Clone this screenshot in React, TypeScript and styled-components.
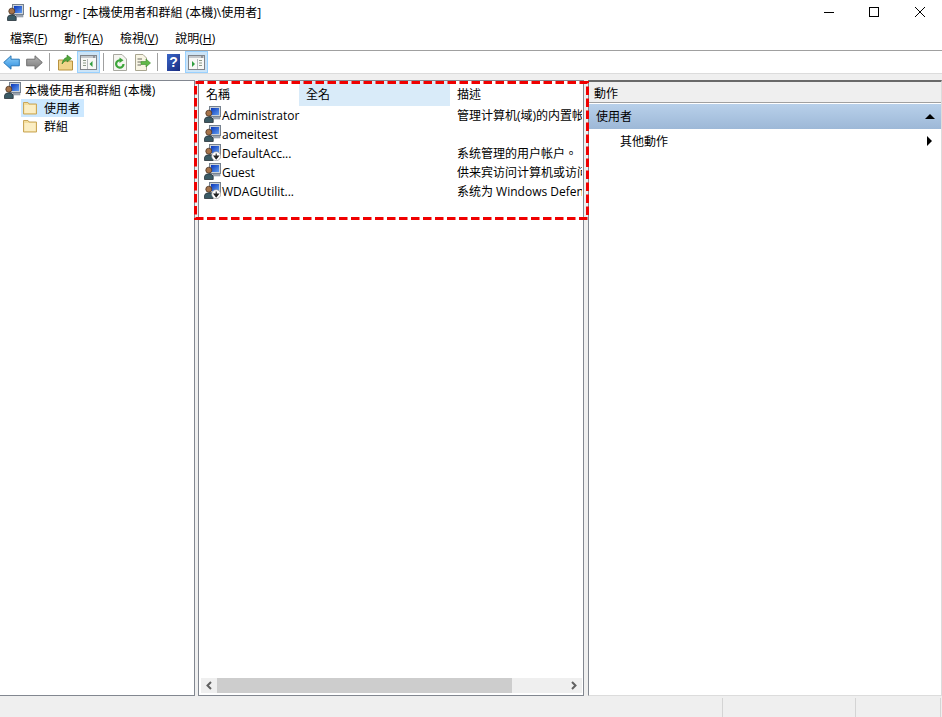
import React from 'react';
import styled, { createGlobalStyle } from 'styled-components';

const GlobalStyle = createGlobalStyle`
  html, body {
    margin: 0;
    padding: 0;
    background: #ffffff;
  }
  body {
    font-family: "Open Sans", "Noto Sans CJK TC", sans-serif;
    font-size: 12px;
    color: #000000;
  }
`;

const users = [
  { name: 'Administrator', desc: '管理计算机(域)的内置帐户', disabled: false },
  { name: 'aomeitest', desc: '', disabled: false },
  { name: 'DefaultAcc...', desc: '系统管理的用户帐户。', disabled: true },
  { name: 'Guest', desc: '供来宾访问计算机或访问域的内', disabled: false },
  { name: 'WDAGUtilit...', desc: '系统为 Windows Defender', disabled: true },
];

const UserIcon = ({ disabled }: { disabled?: boolean }) => (
  <svg width="17" height="17" viewBox="0 0 17 17">
    <defs>
      <linearGradient id="screen" x1="0" y1="0" x2="1" y2="1">
        <stop offset="0" stopColor="#0a36b8" />
        <stop offset="1" stopColor="#5f9cf0" />
      </linearGradient>
    </defs>
    <rect x="5.5" y="0.5" width="11" height="10" fill="#ccd3da" stroke="#76818e" />
    <rect x="7" y="2" width="8" height="7" fill="url(#screen)" />
    <rect x="9" y="11" width="7" height="2" fill="#a4adb8" stroke="#7d8692" strokeWidth="0.5" />
    <circle cx="4.8" cy="7.2" r="3" fill="#a5734a" stroke="#4b3524" strokeWidth="0.8" />
    <path d="M0.5 16.5 V13.5 Q1 10.8 4.8 10.8 Q8.6 10.8 9.2 13.5 V16.5 Z" fill="#3a5a64" stroke="#27323a" strokeWidth="0.8" />
    {disabled && (
      <g>
        <circle cx="12.2" cy="12.2" r="4.5" fill="#ffffff" stroke="#8a8a8a" strokeWidth="0.6" />
        <path d="M12.2 9.4 V12.5 M10 12 L12.2 14.8 L14.4 12 Z" stroke="#222" strokeWidth="1.1" fill="#222" />
      </g>
    )}
  </svg>
);

const FolderIcon = () => (
  <svg width="15" height="14" viewBox="0 0 15 14">
    <path d="M0.5 3 V1.5 H5 L6 3 H13.5 V13 H0.5 Z" fill="#f3dd9c" stroke="#c9a75a" />
    <rect x="1.5" y="4" width="11" height="8" fill="#fbeec4" />
  </svg>
);

const ArrowIcon = ({ dir, light }: { dir: 'left' | 'right'; light?: boolean }) => (
  <svg width="17" height="15" viewBox="0 0 17 15">
    <defs>
      <linearGradient id="arrowBlue" x1="0" y1="0" x2="0" y2="1">
        <stop offset="0" stopColor="#8fd0f8" />
        <stop offset="1" stopColor="#2f8ee0" />
      </linearGradient>
      <linearGradient id="arrowGray" x1="0" y1="0" x2="0" y2="1">
        <stop offset="0" stopColor="#b4b4b4" />
        <stop offset="1" stopColor="#7c7c7c" />
      </linearGradient>
    </defs>
    <path
      d={dir === 'left' ? 'M0.7 7.5 L8 0.8 V4.2 H16.3 V10.8 H8 V14.2 Z' : 'M16.3 7.5 L9 0.8 V4.2 H0.7 V10.8 H9 V14.2 Z'}
      fill={light ? 'url(#arrowGray)' : 'url(#arrowBlue)'}
      stroke={light ? '#6e6e6e' : '#2878b8'}
    />
  </svg>
);

const UpFolderIcon = () => (
  <svg width="17" height="17" viewBox="0 0 17 17">
    <path d="M1.5 6 H6 L7 7 H15.5 V16 H1.5 Z" fill="#f0d48a" stroke="#b8923f" />
    <path d="M5 10 Q6 4 10 3.5 V1 L14.5 4.5 L10 8 V6 Q7.5 6.5 5 10 Z" fill="#52a83c" stroke="#2f7a22" strokeWidth="0.6" />
  </svg>
);

const PaneIcon = ({ side }: { side: 'left' | 'right' }) => (
  <svg width="17" height="15" viewBox="0 0 17 15">
    <rect x="0.5" y="0.5" width="16" height="14" fill="#f8f8f6" stroke="#80848a" />
    <rect x="1" y="1" width="15" height="2" fill="#c4c8cc" />
    <path d="M13 2 H15" stroke="#60646a" />
    {side === 'left' ? (
      <g>
        <path d="M3 5.5 H6 M3 8 H6 M3 10.5 H6" stroke="#8c9a88" strokeWidth="1.2" />
        <path d="M7.5 4 V14" stroke="#b4b8bc" />
        <path d="M12.5 6 V12 L9.5 9 Z" fill="#2f9e3f" />
      </g>
    ) : (
      <g>
        <path d="M11 5.5 H14 M11 8 H14 M11 10.5 H14" stroke="#8c9a88" strokeWidth="1.2" />
        <path d="M9.5 4 V14" stroke="#b4b8bc" />
        <path d="M4 6 V12 L7 9 Z" fill="#2f9e3f" />
      </g>
    )}
  </svg>
);

const RefreshIcon = () => (
  <svg width="16" height="17" viewBox="0 0 16 17">
    <path d="M1.5 0.5 H10 L14.5 5 V16.5 H1.5 Z" fill="#f5f5f0" stroke="#a8a8a0" />
    <path d="M11.5 10 A3.7 3.7 0 1 1 8.8 6.4" fill="none" stroke="#3da53a" strokeWidth="2.2" />
    <path d="M7.5 3.5 L11.5 6.3 L7.5 9 Z" fill="#3da53a" />
  </svg>
);

const ExportIcon = () => (
  <svg width="17" height="17" viewBox="0 0 17 17">
    <path d="M1.5 0.5 H9 L12.5 4 V16.5 H1.5 Z" fill="#f8f5e4" stroke="#a8a590" />
    <path d="M3.5 5 H8 M3.5 8 H7 M3.5 11 H7" stroke="#6a6a60" />
    <path d="M7 7.5 H12 V5 L16.5 9 L12 13 V10.5 H7 Z" fill="#60b848" stroke="#3e8a2c" strokeWidth="0.6" />
  </svg>
);

const Caret = ({ dir }: { dir: 'up' | 'right' }) => (
  <svg width="10" height="10" viewBox="0 0 10 10">
    <path d={dir === 'up' ? 'M0 8 L5 3 L10 8 Z' : 'M2 0 L7 5 L2 10 Z'} fill="#000000" />
  </svg>
);

const Chevron = ({ dir }: { dir: 'left' | 'right' }) => (
  <svg width="8" height="9" viewBox="0 0 8 9">
    <path d={dir === 'left' ? 'M6 1 L2.5 4.5 L6 8' : 'M2 1 L5.5 4.5 L2 8'} fill="none" stroke="#606060" strokeWidth="2" />
  </svg>
);

const App = () => (
  <Window>
    <GlobalStyle />
    <TitleBar>
      <UserIcon />
      <TitleText>lusrmgr - [本機使用者和群組 (本機)\使用者]</TitleText>
      <WindowButtons>
        <svg width="10" height="10" viewBox="0 0 10 10"><path d="M0 5.5 H10" stroke="#000" /></svg>
        <svg width="10" height="10" viewBox="0 0 10 10"><rect x="0.5" y="0.5" width="9" height="9" fill="none" stroke="#000" /></svg>
        <svg width="10" height="10" viewBox="0 0 10 10"><path d="M0 0 L10 10 M10 0 L0 10" stroke="#000" /></svg>
      </WindowButtons>
    </TitleBar>
    <MenuBar>
      <MenuItem>檔案(<u>F</u>)</MenuItem>
      <MenuItem>動作(<u>A</u>)</MenuItem>
      <MenuItem>檢視(<u>V</u>)</MenuItem>
      <MenuItem>說明(<u>H</u>)</MenuItem>
    </MenuBar>
    <ToolBar>
      <ToolButton><ArrowIcon dir="left" /></ToolButton>
      <ToolButton><ArrowIcon dir="right" light /></ToolButton>
      <ToolSeparator />
      <ToolButton><UpFolderIcon /></ToolButton>
      <ToolButton $active><PaneIcon side="left" /></ToolButton>
      <ToolSeparator />
      <ToolButton><RefreshIcon /></ToolButton>
      <ToolButton><ExportIcon /></ToolButton>
      <ToolSeparator />
      <ToolButton><HelpBox>?</HelpBox></ToolButton>
      <ToolButton $active><PaneIcon side="right" /></ToolButton>
    </ToolBar>
    <Workspace>
      <TreePane>
        <TreeRoot>
          <UserIcon />
          <span>本機使用者和群組 (本機)</span>
        </TreeRoot>
        <TreeChild $selected>
          <FolderIcon />
          <span>使用者</span>
        </TreeChild>
        <TreeChild>
          <FolderIcon />
          <span>群組</span>
        </TreeChild>
      </TreePane>
      <ListPane>
        <ListHeader>
          <HeaderCell $width={100}>名稱</HeaderCell>
          <HeaderCell $width={151} $hot>全名</HeaderCell>
          <HeaderCell $width={133}>描述</HeaderCell>
        </ListHeader>
        <ListBody>
          {users.map((u) => (
            <ListRow key={u.name}>
              <NameCell>
                <UserIcon disabled={u.disabled} />
                <span>{u.name}</span>
              </NameCell>
              <DescCell>{u.desc}</DescCell>
            </ListRow>
          ))}
        </ListBody>
        <ScrollBar>
          <ScrollArrow><Chevron dir="left" /></ScrollArrow>
          <ScrollTrack>
            <ScrollThumb />
          </ScrollTrack>
          <ScrollArrow><Chevron dir="right" /></ScrollArrow>
        </ScrollBar>
        <Highlight width="395" height="139" viewBox="0 0 395 139">
          <rect x="1.5" y="1.5" width="392" height="136" fill="none" stroke="#f00000" strokeWidth="3" strokeDasharray="8.5 3.5" />
        </Highlight>
      </ListPane>
      <ActionPane>
        <ActionHeader>動作</ActionHeader>
        <ActionSection>
          <span>使用者</span>
          <Caret dir="up" />
        </ActionSection>
        <ActionItem>
          <span>其他動作</span>
          <Caret dir="right" />
        </ActionItem>
      </ActionPane>
    </Workspace>
    <StatusBar>
      <StatusCell $width={723} />
      <StatusCell $width={133} />
      <StatusCell $width={85} />
    </StatusBar>
  </Window>
);

const Window = styled.div`
  width: 942px;
  height: 717px;
  display: flex;
  flex-direction: column;
  overflow: hidden;
  background: #ffffff;
`;

const TitleBar = styled.div`
  height: 26px;
  display: flex;
  align-items: center;
  padding-left: 7px;
  flex-shrink: 0;
  svg:first-child {
    margin-top: -2px;
  }
`;

const TitleText = styled.div`
  margin-left: 5px;
  font-size: 12px;
  margin-top: -3px;
  white-space: nowrap;
`;

const WindowButtons = styled.div`
  margin-left: auto;
  display: flex;
  gap: 35px;
  padding-right: 17px;
  margin-top: -2px;
  svg:first-child {
    margin-top: 0;
  }
  svg:last-child {
    margin-left: 1px;
  }
`;

const MenuBar = styled.div`
  height: 25px;
  box-sizing: border-box;
  display: flex;
  align-items: center;
  gap: 17px;
  padding-left: 10px;
  border-bottom: 1px solid #a0a0a0;
  flex-shrink: 0;
`;

const MenuItem = styled.div`
  font-size: 12px;
  white-space: nowrap;
  u {
    text-underline-offset: 1px;
  }
`;

const ToolBar = styled.div`
  height: 23px;
  box-sizing: border-box;
  display: flex;
  align-items: center;
  border-bottom: 1px solid #dcdcdc;
  flex-shrink: 0;
`;

const ToolButton = styled.div<{ $active?: boolean }>`
  width: 23px;
  height: 22px;
  box-sizing: border-box;
  display: flex;
  align-items: center;
  justify-content: center;
  background: ${({ $active }) => ($active ? '#cce4f7' : 'transparent')};
  border: 1px solid ${({ $active }) => ($active ? '#99d1ff' : 'transparent')};
`;

const ToolSeparator = styled.div`
  width: 1px;
  height: 18px;
  margin: 0 4px 0 3px;
  background: #a0a0a0;
`;

const HelpBox = styled.div`
  width: 13px;
  height: 17px;
  display: flex;
  align-items: center;
  justify-content: center;
  background: linear-gradient(135deg, #3a66c8, #1a2c80);
  color: #ffffff;
  font-family: "Liberation Sans", sans-serif;
  font-weight: bold;
  font-size: 14px;
`;

const Workspace = styled.div`
  flex: 1;
  min-height: 0;
  display: flex;
  gap: 3px;
  padding-top: 6px;
  background: #efefef;
`;

const TreePane = styled.div`
  width: 195px;
  box-sizing: border-box;
  background: #ffffff;
  border-top: 1px solid #828790;
  border-right: 1px solid #828790;
  border-bottom: 1px solid #828790;
`;

const TreeRoot = styled.div`
  height: 18px;
  display: flex;
  align-items: center;
  gap: 4px;
  padding-left: 4px;
  font-size: 12px;
  white-space: nowrap;
`;

const TreeChild = styled.div<{ $selected?: boolean }>`
  width: 63px;
  height: 18px;
  margin-left: 21px;
  display: flex;
  align-items: center;
  gap: 6px;
  padding-left: 2px;
  box-sizing: border-box;
  font-size: 12px;
  white-space: nowrap;
  background: ${({ $selected }) => ($selected ? '#cce8ff' : 'transparent')};
`;

const ListPane = styled.div`
  position: relative;
  width: 386px;
  margin-right: 1px;
  box-sizing: border-box;
  background: #ffffff;
  display: flex;
  flex-direction: column;
  border: 1px solid #828790;
`;

const ListHeader = styled.div`
  height: 25px;
  display: flex;
  flex-shrink: 0;
`;

const HeaderCell = styled.div<{ $width: number; $hot?: boolean }>`
  width: ${({ $width }) => $width}px;
  box-sizing: border-box;
  padding: 4px 0 0 7px;
  font-size: 12px;
  background: ${({ $hot }) => ($hot ? '#d9ebf9' : 'transparent')};
`;

const ListBody = styled.div`
  flex: 1;
  min-height: 0;
  margin-top: -1px;
  padding-left: 5px;
`;

const ListRow = styled.div`
  height: 19px;
  display: flex;
  align-items: center;
`;

const NameCell = styled.div`
  width: 253px;
  flex-shrink: 0;
  display: flex;
  align-items: center;
  gap: 1px;
  font-size: 12px;
  white-space: nowrap;
  span {
    padding-top: 2px;
  }
`;

const DescCell = styled.div`
  width: 125px;
  overflow: hidden;
  font-size: 12px;
  white-space: nowrap;
`;

const ScrollBar = styled.div`
  height: 15px;
  margin: 0 0 2px 2px;
  width: 381px;
  display: flex;
  background: #efefef;
  flex-shrink: 0;
`;

const ScrollArrow = styled.div`
  width: 16px;
  display: flex;
  align-items: center;
  justify-content: center;
`;

const ScrollTrack = styled.div`
  flex: 1;
`;

const ScrollThumb = styled.div`
  width: 295px;
  height: 100%;
  background: #cdcdcd;
`;

const Highlight = styled.svg`
  position: absolute;
  left: -5px;
  top: 0;
  pointer-events: none;
`;

const ActionPane = styled.div`
  width: 354px;
  box-sizing: border-box;
  background: #ffffff;
  border-top: 2px solid #696969;
  border-left: 1px solid #828790;
  border-right: 1px solid #dcdcdc;
  border-bottom: 1px solid #dcdcdc;
`;

const ActionHeader = styled.div`
  height: 21px;
  box-sizing: border-box;
  padding: 2px 0 0 5px;
  font-size: 12px;
  background: #efefef;
  border-bottom: 1px solid #a0a0a0;
`;

const ActionSection = styled.div`
  margin-top: 1px;
  height: 25px;
  box-sizing: border-box;
  display: flex;
  align-items: center;
  justify-content: space-between;
  padding: 0 6px 1px 7px;
  font-size: 12px;
  background: linear-gradient(#b8d0ea, #9db8d7);
`;

const ActionItem = styled.div`
  height: 24px;
  display: flex;
  align-items: center;
  justify-content: space-between;
  padding: 0 6px 0 31px;
  font-size: 12px;
`;

const StatusBar = styled.div`
  height: 21px;
  box-sizing: border-box;
  padding-top: 2px;
  display: flex;
  background: #efefef;
  flex-shrink: 0;
`;

const StatusCell = styled.div<{ $width: number }>`
  width: ${({ $width }) => $width}px;
  box-sizing: border-box;
  border-right: 1px solid #d4d4d4;
`;

export default App;
